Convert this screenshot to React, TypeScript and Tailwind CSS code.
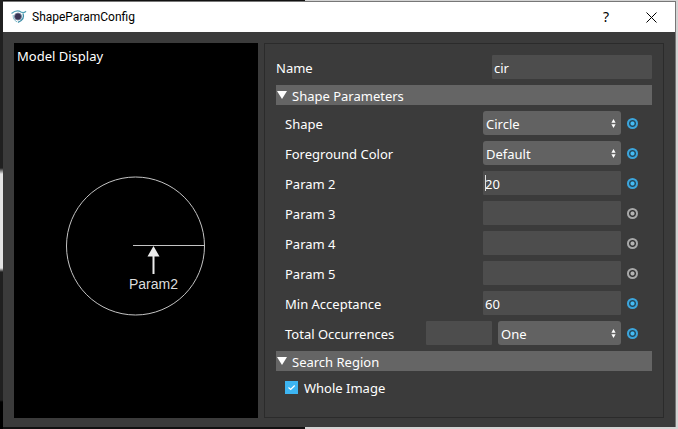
import { useState } from "react";
import type { ReactNode } from "react";

const fieldClass =
  "h-6 min-w-0 rounded-[1px] bg-[#4d4d4d] px-0.5 pt-0.5 text-[13px] text-white outline-none";

function AppIcon() {
  return (
    <svg viewBox="0 0 16 16" className="size-4 shrink-0" fill="none" aria-hidden="true">
      <path d="M.5 4.500C3.500 2 7.500 1.300 10 3c1.700 1 3.300.8 5-.8" stroke="#57a3b8" strokeWidth="1.300" />
      <path d="M12 4.500c1.300 3.500-.5 7-5 8.800" stroke="#3f8fa8" strokeWidth="1.300" />
      <path d="M2.200 6c-.4 3 1 5.500 4 7" stroke="#7cb9c8" strokeWidth="1" />
      <circle cx="7" cy="7.500" r="3.500" fill="#3a3454" stroke="#6f7f9c" strokeWidth=".8" />
    </svg>
  );
}

function SelectField({
  id,
  value,
  options,
  label,
}: {
  id: string;
  value: string;
  options: string[];
  label?: string;
}) {
  return (
    <div className="relative min-w-0 flex-1">
      <select
        id={id}
        defaultValue={value}
        aria-label={label}
        className="block h-6 w-full appearance-none rounded-[3px] bg-[#626262] pt-0.5 pr-5 pl-[3px] text-[13px] text-white outline-none"
      >
        {options.map((option) => (
          <option key={option}>{option}</option>
        ))}
      </select>
      <svg
        viewBox="0 0 5 9"
        className="pointer-events-none absolute top-2 right-[5px] h-[9px] w-[5px]"
        fill="#fff"
        aria-hidden="true"
      >
        <path d="M2.500 0 4.600 3.800H.4zM2.500 9 4.600 5.200H.4z" />
      </svg>
    </div>
  );
}

function LinkToggle({ label, on }: { label: string; on: boolean }) {
  return (
    <input
      type="radio"
      aria-label={`Link ${label}`}
      defaultChecked={on}
      className="size-[11px] shrink-0 appearance-none rounded-full bg-[radial-gradient(circle,#b4b4b4_1.5px,#333_2.5px,#333_3px,#a8a8a8_4px)] checked:bg-[radial-gradient(circle,#45bdf5_1.5px,#24485c_2.5px,#24485c_3px,#3ba5dc_4px)]"
    />
  );
}

function ParamRow({
  id,
  label,
  on = false,
  children,
}: {
  id: string;
  label: string;
  on?: boolean;
  children: ReactNode;
}) {
  return (
    <div className="flex h-6 items-center pr-[14px] pl-[9px]">
      <label htmlFor={id} className="min-w-0 flex-1 pt-0.5">
        {label}
      </label>
      {children}
      <div className="ml-1.5 flex">
        <LinkToggle label={label} on={on} />
      </div>
    </div>
  );
}

function Section({ title, children }: { title: string; children: ReactNode }) {
  const [open, setOpen] = useState(true);
  return (
    <section className="flex flex-col gap-1.5">
      <h2>
        <button
          type="button"
          aria-expanded={open}
          onClick={() => setOpen(!open)}
          className="flex h-5 w-full items-center gap-[5px] bg-[#656565] pl-px text-left"
        >
          <svg viewBox="0 0 10 10" className="size-2.5" fill="#fff" aria-hidden="true">
            <path d={open ? "M0 1h10L5 9z" : "M1 0v10l8-5z"} />
          </svg>
          <span className="pt-0.5">{title}</span>
        </button>
      </h2>
      {open && children}
    </section>
  );
}

function ModelDisplay() {
  return (
    <section className="flex w-[244px] shrink-0 flex-col bg-black">
      <h2 className="px-[3px] pt-[3px] leading-5">Model Display</h2>
      <svg
        viewBox="0 0 244 350"
        className="mt-px w-full"
        fill="none"
        role="img"
        aria-label="Circle with its radius marked as Param2"
      >
        <circle cx="121.500" cy="179" r="69" stroke="#c4c4c4" />
        <path d="M119 178.500h72" stroke="#c4c4c4" />
        <path d="M139.500 179l6 10.500h-5V207h-2v-17.500h-5z" fill="#ececec" />
        <text x="115" y="222" fill="#dcdcdc" fontSize="14" className="font-['Liberation_Sans',Arial,sans-serif]">
          Param2
        </text>
      </svg>
    </section>
  );
}

export default function App() {
  return (
    <div className="flex min-h-screen bg-[linear-gradient(90deg,#111_0_305px,#d4d4d4_305px)] font-['Noto_Sans',sans-serif] text-[13px] leading-[18px] text-white">
      <div className="w-[3px] shrink-0 bg-[linear-gradient(#202020_0_168px,#e4e4e4_174px_268px,#202020_272px_400px,#000_402px)]" />
      <main className="mt-px mr-0.5 mb-0.5 flex min-w-0 flex-1 flex-col border-t border-r border-[#777] bg-[#3b3b3b]">
        <header className="flex h-[30px] shrink-0 items-center bg-white pr-[18px] pl-2 text-black">
          <AppIcon />
          <h1 className="ml-[5px] flex-1 font-['Roboto',sans-serif] text-xs">ShapeParamConfig</h1>
          <button type="button" aria-label="Help" className="w-3 text-sm">
            ?
          </button>
          <button type="button" aria-label="Close" className="ml-[34px]">
            <svg viewBox="0 0 11 11" className="size-[11px]" stroke="#000" aria-hidden="true">
              <path d="M.5.5l10 10M10.500.5l-10 10" />
            </svg>
          </button>
        </header>

        <div className="flex flex-1 gap-1.5 px-[11px] pt-[11px] pb-[9px]">
          <ModelDisplay />

          <form className="flex min-w-0 flex-1 flex-col gap-1.5 border border-[#2b2b2b] px-[11px] pt-[11px]">
            <div className="flex h-6 items-center">
              <label htmlFor="name" className="flex-1 pt-0.5">
                Name
              </label>
              <input id="name" defaultValue="cir" className={`${fieldClass} w-40`} />
            </div>

            <Section title="Shape Parameters">
              <ParamRow id="shape" label="Shape" on>
                <div className="flex w-[138px]">
                  <SelectField id="shape" value="Circle" options={["Circle", "Ellipse", "Rectangle"]} />
                </div>
              </ParamRow>
              <ParamRow id="color" label="Foreground Color" on>
                <div className="flex w-[138px]">
                  <SelectField id="color" value="Default" options={["Default", "Black", "White"]} />
                </div>
              </ParamRow>
              <ParamRow id="param2" label="Param 2" on>
                <div className="relative flex w-[138px]">
                  <input id="param2" defaultValue="20" className={`${fieldClass} w-full`} />
                  <span className="absolute top-1 left-0.5 h-4 w-px bg-[#e0e0e0]" />
                </div>
              </ParamRow>
              <ParamRow id="param3" label="Param 3">
                <input id="param3" className={`${fieldClass} w-[138px]`} />
              </ParamRow>
              <ParamRow id="param4" label="Param 4">
                <input id="param4" className={`${fieldClass} w-[138px]`} />
              </ParamRow>
              <ParamRow id="param5" label="Param 5">
                <input id="param5" className={`${fieldClass} w-[138px]`} />
              </ParamRow>
              <ParamRow id="acceptance" label="Min Acceptance" on>
                <input id="acceptance" defaultValue="60" className={`${fieldClass} w-[138px]`} />
              </ParamRow>
              <ParamRow id="occurrences" label="Total Occurrences" on>
                <div className="flex w-[195px] gap-1.5">
                  <input id="occurrences" className={`${fieldClass} w-[66px]`} />
                  <SelectField
                    id="occurrence-mode"
                    label="Occurrence mode"
                    value="One"
                    options={["One", "All", "Specific"]}
                  />
                </div>
              </ParamRow>
            </Section>

            <Section title="Search Region">
              <label className="flex h-5 items-center gap-1.5 pl-[9px]">
                <span className="relative flex">
                  <input
                    type="checkbox"
                    defaultChecked
                    className="peer size-[13px] appearance-none bg-[#4d4d4d] checked:bg-[#3db5f2]"
                  />
                  <svg
                    viewBox="0 0 13 13"
                    className="pointer-events-none absolute inset-0 hidden size-[13px] peer-checked:block"
                    fill="none"
                    stroke="#fff"
                    strokeWidth="1.200"
                    aria-hidden="true"
                  >
                    <path d="M3.500 6.500l2.200 2 4-4" />
                  </svg>
                </span>
                <span className="pt-0.5">Whole Image</span>
              </label>
            </Section>
          </form>
        </div>
      </main>
    </div>
  );
}
